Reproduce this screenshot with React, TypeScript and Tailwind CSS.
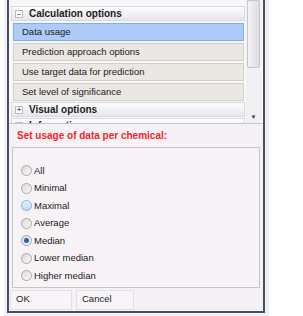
import React from "react";

const items = [
  "Data usage",
  "Prediction approach options",
  "Use target data for prediction",
  "Set level of significance",
];

const options = ["All", "Minimal", "Maximal", "Average", "Median", "Lower median", "Higher median"];

function Expander({ open }: { open: boolean }) {
  return (
    <span className="flex h-[8px] w-[8px] items-center justify-center border border-[#b9bcc4] bg-white text-[7px] leading-none text-[#5a6070]">
      {open ? "–" : "+"}
    </span>
  );
}

function Header({ title, open }: { title: string; open: boolean }) {
  return (
    <div className="flex h-[15px] shrink-0 items-center gap-[6px] border border-[#d9d9e0] bg-gradient-to-b from-[#fdfdfe] to-[#e6e6ec] pl-[3px] text-[10px] font-bold text-[#1c1c1c]">
      <Expander open={open} />
      {title}
    </div>
  );
}

function Radio({ state }: { state: "off" | "hover" | "on" }) {
  if (state === "hover") {
    return <span className="h-[11px] w-[11px] rounded-full border border-[#7fb0dd] bg-gradient-to-b from-[#e4f2fc] to-[#b9dbf4]" />;
  }
  return (
    <span className="flex h-[11px] w-[11px] items-center justify-center rounded-full border border-[#a9a9a9] bg-gradient-to-br from-[#d9d9d9] to-[#fafafa]">
      {state === "on" && <span className="h-[5px] w-[5px] rounded-full bg-[#2a62b8]" />}
    </span>
  );
}

export default function App() {
  return (
    <div className="h-[316px] w-[303px] bg-white font-['Liberation_Sans',sans-serif]">
      <div className="ml-[4px] h-[316px] w-[265px] bg-[#eef0fb] pb-[3px] pl-[3px] pr-[4px]">
        <div className="flex h-full flex-col border-x-2 border-b-2 border-[#4b5058] bg-[#f6f1f5]">
          {/* accordion */}
          <div className="flex h-[123px] shrink-0 overflow-hidden bg-[#f7f7f9]">
            <div className="flex w-[236px] flex-col pl-[2px] pt-[6px]">
              <Header title="Calculation options" open />
              <div className="flex shrink-0 flex-col gap-[2px] pl-[2px] pt-[2px] pr-[1px]">
                {items.map((t, i) => (
                  <div
                    key={t}
                    className={
                      i === 0
                        ? "flex h-[18px] items-center border border-[#7eaef2] bg-[#aecbf7] pl-[8px] text-[9.5px] text-[#1a1a1a]"
                        : "flex h-[18px] items-center border border-[#d3cec7] bg-[#ebe8e3] pl-[8px] text-[9.5px] text-[#1a1a1a]"
                    }
                  >
                    {t}
                  </div>
                ))}
              </div>
              <div className="mt-[1px] flex shrink-0 flex-col gap-[1px]">
                <Header title="Visual options" open={false} />
                <Header title="Information" open={false} />
              </div>
            </div>
            <div className="ml-[1px] flex w-[15px] flex-col bg-[#f0f0f3]">
              <div className="mx-[1px] h-[68px] rounded-b-[2px] border border-[#c6c6cc] bg-gradient-to-r from-[#f4f4f6] to-[#dcdce2]" />
              <div className="flex-1" />
              <div className="mb-[3px] flex justify-center text-[6px] leading-none text-[#333]">▼</div>
            </div>
          </div>
          {/* title */}
          <div className="flex h-[24px] shrink-0 items-center border-t border-[#c9c6ca] pl-[8px] text-[10px] font-bold text-[#f0252a]">
            Set usage of data per chemical:
          </div>
          {/* group */}
          <div className="ml-[3px] mr-[3px] flex h-[141px] shrink-0 flex-col border border-[#c8c5c9] bg-[#f7f2f6] pl-[8px] pt-[14px]">
            {options.map((o, i) => (
              <div key={o} className="flex h-[17.5px] items-center gap-[2px] text-[9.5px] text-[#1a1a1a]">
                <Radio state={i === 4 ? "on" : i === 2 ? "hover" : "off"} />
                {o}
              </div>
            ))}
          </div>
          {/* buttons */}
          <div className="flex flex-1 items-center gap-[4px] pl-[1px]">
            <div className="flex h-[20px] w-[62px] items-center border border-[#e3dfe3] bg-[#f8f5f8] pl-[5px] text-[9.5px] text-[#1a1a1a]">
              OK
            </div>
            <div className="flex h-[20px] w-[58px] items-center border border-[#e3dfe3] bg-[#f8f5f8] pl-[5px] text-[9.5px] text-[#1a1a1a]">
              Cancel
            </div>
          </div>
        </div>
      </div>
    </div>
  );
}
